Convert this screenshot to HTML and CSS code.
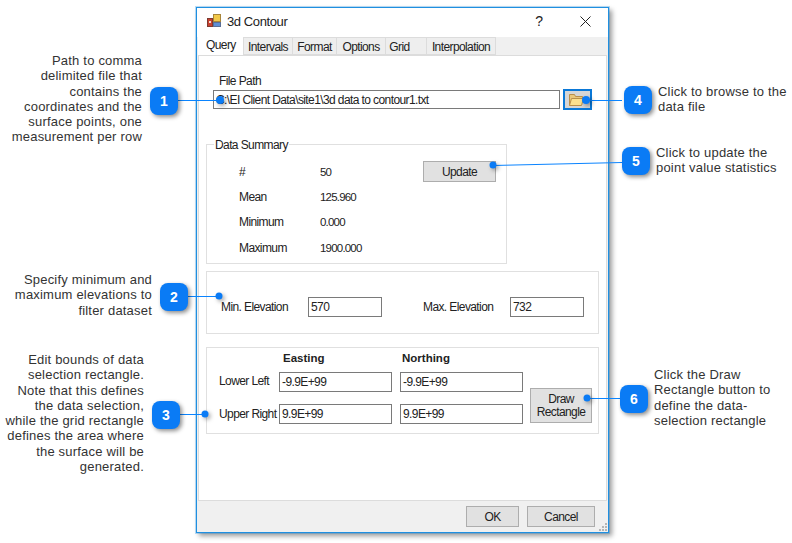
FILE: index.html
```html
<!DOCTYPE html>
<html lang="en">
<head>
<meta charset="utf-8">
<title>3d Contour</title>
<link rel="stylesheet" href="styles.css">
</head>
<body>
<main class="stage">
  <section class="dialog">
    <header class="titlebar">
      <svg class="app-icon" width="16" height="16" viewBox="0 0 16 16"><rect x="7.500" y="1.500" width="7" height="7" fill="#f2c94a" stroke="#a8853a"/><rect x="1.500" y="5.500" width="5" height="8" fill="#c8402e" stroke="#7d3a30"/><rect x="7.500" y="9.500" width="7" height="4" fill="#5d8fd6" stroke="#5a6f96"/><rect x="3" y="8" width="2" height="2" fill="#f4d8d0"/></svg>
      <span class="title-text">3d Contour</span>
      <span class="help">?</span>
      <svg class="close" width="11" height="11" viewBox="0 0 11 11"><path d="M.5 .5L10.500 10.500M10.500 .5L.5 10.500" stroke="#222" stroke-width="1" fill="none"/></svg>
    </header>
    <nav class="tabs">
      <span class="tab active">Query</span>
      <span class="tab t-int">Intervals</span>
      <span class="tab t-fmt">Format</span>
      <span class="tab t-opt">Options</span>
      <span class="tab t-grd">Grid</span>
      <span class="tab t-itp">Interpolation</span>
    </nav>
    <div class="panel">
      <div class="file-block">
        <label class="file-label">File Path</label>
        <div class="file-row">
          <div class="field file-field">C:\EI Client Data\site1\3d data to contour1.txt</div>
          <button class="browse" type="button">
            <svg width="15" height="13" viewBox="0 0 15 13"><path d="M.5 12.500V1.500h5l1 2h7v2" fill="#e9c77b" stroke="#b98f4a"/><path d="M.5 12.500l2-7h12l-2 7z" fill="#fbe08f" stroke="#b98f4a"/></svg>
          </button>
        </div>
      </div>
      <fieldset class="group summary">
        <legend>Data Summary</legend>
        <div class="stats">
          <span>#</span><span class="num">50</span>
          <span>Mean</span><span class="num">125.960</span>
          <span>Minimum</span><span class="num">0.000</span>
          <span>Maximum</span><span class="num">1900.000</span>
        </div>
        <button class="btn update" type="button">Update</button>
      </fieldset>
      <div class="group elevation">
        <span class="el-min">Min. Elevation</span>
        <div class="field el-field">570</div>
        <span class="el-max">Max. Elevation</span>
        <div class="field el-field">732</div>
      </div>
      <div class="group bounds">
        <div class="bounds-grid">
          <span></span><b class="col-e">Easting</b><b class="col-n">Northing</b>
          <span class="row-l">Lower Left</span><div class="field f-e">-9.9E+99</div><div class="field f-n">-9.9E+99</div>
          <span class="row-u">Upper Right</span><div class="field f-e">9.9E+99</div><div class="field f-n">9.9E+99</div>
        </div>
        <button class="btn draw" type="button">Draw<br>Rectangle</button>
      </div>
    </div>
    <footer class="footer">
      <button class="btn ok" type="button">OK</button>
      <button class="btn cancel" type="button">Cancel</button>
      <svg class="grip" width="10" height="10" viewBox="0 0 10 10"><g fill="#b5b5b5"><rect x="7" y="1" width="2" height="2"/><rect x="4" y="4" width="2" height="2"/><rect x="7" y="4" width="2" height="2"/><rect x="1" y="7" width="2" height="2"/><rect x="4" y="7" width="2" height="2"/><rect x="7" y="7" width="2" height="2"/></g></svg>
    </footer>
  </section>

  <svg class="leaders" width="792" height="543" viewBox="0 0 792 543">
    <g stroke="#0a84ff" stroke-width="1" fill="none">
      <path d="M178 100.500H220"/>
      <path d="M622 100.500H586"/>
      <path d="M622 162.500L493 165.500"/>
      <path d="M188 296.500H219"/>
      <path d="M180 414.500H205"/>
      <path d="M620 398.500H588"/>
    </g>
    <g class="dots" fill="#0a7bf5">
      <circle cx="220" cy="100" r="4"/>
      <circle cx="586" cy="100" r="4"/>
      <circle cx="493" cy="165" r="3.500"/>
      <circle cx="219" cy="296" r="3.500"/>
      <circle cx="205" cy="414" r="3.500"/>
      <circle cx="587" cy="398" r="3.500"/>
    </g>
  </svg>

  <span class="badge b1">1</span>
  <span class="badge b2">2</span>
  <span class="badge b3">3</span>
  <span class="badge b4">4</span>
  <span class="badge b5">5</span>
  <span class="badge b6">6</span>

  <p class="note right n1">Path to comma<br>delimited file that<br>contains the<br>coordinates and the<br>surface points, one<br>measurement per row</p>
  <p class="note right n2">Specify minimum and<br>maximum elevations to<br>filter dataset</p>
  <p class="note right n3">Edit bounds of data<br>selection rectangle.<br>Note that this defines<br>the data selection,<br>while the grid rectangle<br>defines the area where<br>the surface will be<br>generated.</p>
  <p class="note n4">Click to browse to the<br>data file</p>
  <p class="note n5">Click to update the<br>point value statistics</p>
  <p class="note n6">Click the Draw<br>Rectangle button to<br>define the data-<br>selection rectangle</p>
</main>
</body>
</html>
```

FILE: styles.css
```css
* { box-sizing: border-box; }
html, body { margin: 0; padding: 0; background: #fff; }
.stage {
  position: relative;
  width: 792px;
  height: 543px;
  overflow: hidden;
  font-family: "Liberation Sans", Arial, sans-serif;
  color: #222;
}
.dialog {
  position: absolute;
  left: 196px;
  top: 7px;
  width: 413px;
  height: 526px;
  background: #f0f0f0;
  border: 1px solid #1f8fe0;
  box-shadow: 0 0 0 1px rgba(31,143,224,.3), 3px 3px 5px rgba(0,0,0,.4);
  display: flex;
  flex-direction: column;
  font-size: 12px;
  letter-spacing: -.6px;
}
.titlebar {
  height: 29px;
  background: #fff;
  display: flex;
  align-items: center;
  padding: 0 17px 3px 9px;
  flex: none;
}
.app-icon { flex: none; }
.title-text { font-size: 13px; letter-spacing: -.4px; margin-left: 5px; flex: 1; }
.help { font-size: 14px; margin-right: 37px; letter-spacing: 0; }
.tabs {
  height: 18px;
  flex: none;
  display: flex;
  align-items: stretch;
  padding-left: 1px;
  background: #f0f0f0;
}
.tab {
  height: 18px;
  padding-top: 1px;
  background: #eee;
  border: 1px solid #dcdcdc;
  border-left: 0;
  display: flex;
  align-items: center;
  justify-content: center;
}
.tab.active {
  background: #fff;
  width: 45px;
  height: 20px;
  margin-top: -2px;
  padding-top: 0;
  border: 0;
  justify-content: flex-start;
  padding-left: 8px;
  z-index: 1;
}
.t-int { width: 50px; border-left: 1px solid #dcdcdc; }
.t-fmt { width: 44px; }
.t-opt { width: 49px; }
.t-grd { width: 41px; padding-right: 13px; }
.t-itp { width: 69px; }
.panel {
  height: 446px;
  flex: none;
  margin: 0 1px;
  background: #fff;
  border: 1px solid #dcdcdc;
  display: flex;
  flex-direction: column;
  padding: 17px 0 0 7px;
}
.file-label { display: block; margin-left: 13px; height: 15px; line-height: 16px; }
.file-row { display: flex; align-items: center; gap: 3px; margin-left: 7px; margin-top: 1px; }
.field {
  height: 20px;
  border: 1px solid #7a7a7a;
  background: #fff;
  line-height: 18px;
  padding-left: 2px;
  white-space: nowrap;
  overflow: hidden;
}
.file-field { width: 347px; height: 19px; line-height: 19px; }
.browse {
  width: 29px;
  height: 21px;
  padding: 0 0 0 4px;
  background: #d6d6d6;
  border: 2px solid #0a78d7;
  display: flex;
  align-items: center;
  justify-content: flex-start;
}
.group {
  margin: 0;
  border: 1px solid #e0e0e0;
  background: #fff;
}
.summary {
  width: 301px;
  height: 127px;
  margin-top: 27px;
  padding: 0;
  display: flex;
}
.summary legend { padding: 2px 1px 0; margin-left: 7px; line-height: 12px; }
.stats {
  display: grid;
  grid-template-columns: 81px auto;
  grid-auto-rows: 25.300px;
  align-items: center;
  padding: 8px 0 0 32px;
  width: 216px;
}
.num { font-size: 11.500px; letter-spacing: -.8px; }
.btn {
  font: inherit;
  letter-spacing: inherit;
  color: #222;
  background: #e1e1e1;
  border: 1px solid #adadad;
  padding: 0;
}
.update { width: 73px; height: 21px; margin-top: 10px; }
.elevation {
  width: 393px;
  height: 63px;
  margin-top: 7px;
  display: flex;
  align-items: center;
  padding: 9px 0 0 14px;
}
.el-min { width: 87px; }
.el-max { width: 87px; margin-left: 41px; }
.el-field { width: 74px; }
.bounds {
  width: 393px;
  height: 87px;
  margin-top: 13px;
  display: flex;
  padding: 3px 0 0 12px;
}
.bounds-grid {
  display: grid;
  grid-template-columns: 60px 121px 130px;
  grid-template-rows: 21px 32px 20px;
  align-items: start;
  white-space: nowrap;
}
.bounds-grid b { font-size: 11.500px; letter-spacing: 0; line-height: 14px; }
.f-e { width: 113px; }
.f-n { width: 123px; }
.row-l { line-height: 18px; }
.row-u { line-height: 20px; }
.col-e { margin-left: 4px; }
.col-n { margin-left: 2px; }
.draw { width: 62px; height: 35px; margin-top: 37px; line-height: 13px; }
.footer {
  flex: 1;
  display: flex;
  justify-content: flex-end;
  align-items: flex-start;
  gap: 8px;
  padding: 5px 13px 0 0;
  position: relative;
}
.ok { width: 53px; height: 21px; }
.cancel { width: 68px; height: 21px; }
.grip { position: absolute; right: 0; bottom: 0; }
.leaders { position: absolute; left: 0; top: 0; }
.dots { filter: drop-shadow(2px 2px 2px rgba(0,0,0,.35)); }
.badge {
  position: absolute;
  width: 28px;
  height: 28px;
  border-radius: 8px;
  background: #0a7bf5;
  color: #fff;
  font: bold 14px/28px "Liberation Sans", Arial, sans-serif;
  text-align: center;
  box-shadow: 2px 2px 4px rgba(0,0,0,.45);
}
.b1 { left: 150px; top: 87px; }
.b2 { left: 160px; top: 283px; }
.b3 { left: 152px; top: 401px; }
.b4 { left: 624px; top: 86px; }
.b5 { left: 622px; top: 147px; }
.b6 { left: 620px; top: 385px; }
.note {
  position: absolute;
  margin: 0;
  font-size: 13px;
  line-height: 15.300px;
  letter-spacing: .2px;
  color: #333;
  white-space: nowrap;
}
.right { text-align: right; }
.n1 { right: 650px; top: 53px; }
.n2 { right: 640px; top: 272px; }
.n3 { right: 648px; top: 352px; }
.n4 { left: 658px; top: 84px; }
.n5 { left: 656px; top: 145px; }
.n6 { left: 654px; top: 367px; }
```
